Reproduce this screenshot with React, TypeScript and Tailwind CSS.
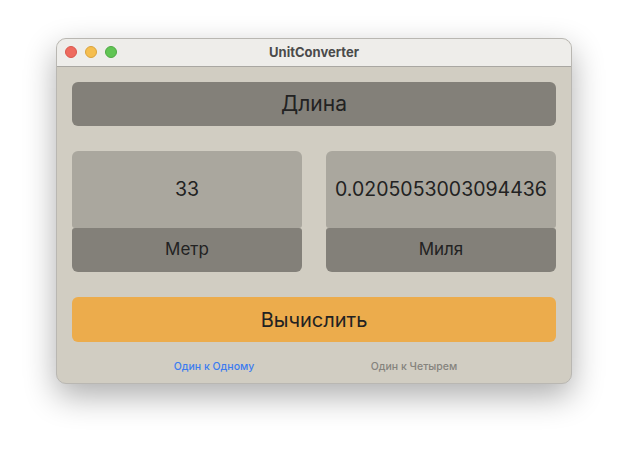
import React from "react";

export default function App() {
  return (
    <div className="w-[628px] h-[458px] bg-white flex justify-center pt-[38px] font-['Inter','Liberation_Sans',sans-serif]">
      <div className="w-[516px] h-[346px] rounded-[10px] overflow-hidden border border-[#b9b7b2] bg-[#d1cdc2] shadow-[0_12px_32px_rgba(0,0,0,0.32)] flex flex-col">
        <div className="relative h-[28px] bg-[#eeedea] border-b border-[#a9a7a2] flex items-center justify-center">
          <div className="absolute left-[8px] top-[7px] flex gap-[8px]">
            <span className="w-[12px] h-[12px] rounded-full bg-[#ee6a5e] border border-[#d9574c]" />
            <span className="w-[12px] h-[12px] rounded-full bg-[#f5be4f] border border-[#d9a33c]" />
            <span className="w-[12px] h-[12px] rounded-full bg-[#61c554] border border-[#4fa944]" />
          </div>
          <span className="text-[13px] font-bold text-[#4a4a4a]">UnitConverter</span>
        </div>
        <div className="flex flex-col px-[15px] pt-[15px]">
          <div className="h-[44px] rounded-[6px] bg-[#838079] flex items-center justify-center text-[21px] text-[#222]">
            Длина
          </div>
          <div className="flex gap-[24px] mt-[25px]">
            <div className="flex-1 flex flex-col">
              <div className="h-[77px] rounded-t-[6px] rounded-b-[3px] bg-[#aaa79e] flex items-center justify-center text-[19.5px] text-[#222]">33</div>
              <div className="h-[44px] rounded-b-[6px] rounded-t-[3px] bg-[#838079] flex items-center justify-center text-[17px] text-[#222]">Метр</div>
            </div>
            <div className="flex-1 flex flex-col">
              <div className="h-[77px] rounded-t-[6px] rounded-b-[3px] bg-[#aaa79e] flex items-center justify-center text-[19.5px] text-[#222]">0.0205053003094436</div>
              <div className="h-[44px] rounded-b-[6px] rounded-t-[3px] bg-[#838079] flex items-center justify-center text-[17px] text-[#222]">Миля</div>
            </div>
          </div>
          <div className="h-[45px] mt-[25px] rounded-[6px] bg-[#ecac4c] flex items-center justify-center text-[20px] text-[#222]">
            Вычислить
          </div>
          <div className="flex justify-center mt-[17px]">
            <div className="w-[200px] text-center text-[10.5px] font-medium text-[#3b7cf0]">Один к Одному</div>
            <div className="w-[200px] text-center text-[10.5px] font-medium text-[#85837d]">Один к Четырем</div>
          </div>
        </div>
      </div>
    </div>
  );
}
